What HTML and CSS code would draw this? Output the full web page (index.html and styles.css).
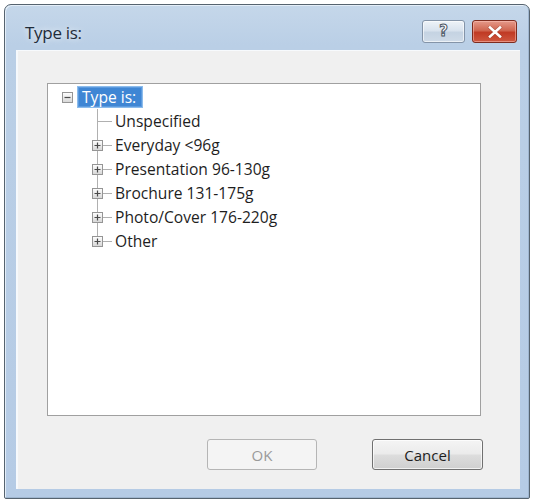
FILE: index.html
```html
<!DOCTYPE html>
<html>
<head>
<meta charset="utf-8">
<link rel="stylesheet" href="styles.css">
</head>
<body>
<div class="window">
  <div class="titlebar">
    <div class="title">Type is:</div>
    <div class="caption-buttons">
      <div class="cap help"><span>?</span></div>
      <div class="cap close">
        <svg width="16" height="12" viewBox="0 0 16 12">
          <path d="M3 1.5 L13 10.5 M13 1.5 L3 10.5" stroke="#7a2a1c" stroke-width="3.6" stroke-linecap="square" opacity="0.45"/>
          <path d="M3 1.5 L13 10.5 M13 1.5 L3 10.5" stroke="#ffffff" stroke-width="2.6" stroke-linecap="square"/>
        </svg>
      </div>
    </div>
  </div>
  <div class="client">
    <div class="tree">
      <div class="row root">
        <span class="expander">
          <svg width="11" height="11" viewBox="0 0 11 11">
            <defs><linearGradient id="g1" x1="0" y1="0" x2="0" y2="1"><stop offset="0" stop-color="#ffffff"/><stop offset="1" stop-color="#d6d6d6"/></linearGradient></defs>
            <rect x="0.5" y="0.5" width="10" height="10" fill="url(#g1)" stroke="#959595"/>
            <path d="M2.5 5.5 H8.5" stroke="#4a4a4a" stroke-width="1.2"/>
          </svg>
        </span>
        <span class="sel">Type is:</span>
      </div>
      <div class="children">
        <div class="row child">
          <span class="gutter leaf"></span><span class="conn"></span><span class="label">Unspecified</span>
        </div>
        <div class="row child">
          <span class="gutter"><svg width="11" height="11" viewBox="0 0 11 11"><defs><linearGradient id="g2" x1="0" y1="0" x2="0" y2="1"><stop offset="0" stop-color="#ffffff"/><stop offset="1" stop-color="#d6d6d6"/></linearGradient></defs><rect x="0.5" y="0.5" width="10" height="10" fill="url(#g2)" stroke="#959595"/><path d="M2.5 5.5 H8.5 M5.5 2.5 V8.5" stroke="#4a4a4a" stroke-width="1.2"/></svg></span><span class="conn"></span><span class="label">Everyday &lt;96g</span>
        </div>
        <div class="row child">
          <span class="gutter"><svg width="11" height="11" viewBox="0 0 11 11"><rect x="0.5" y="0.5" width="10" height="10" fill="url(#g2)" stroke="#959595"/><path d="M2.5 5.5 H8.5 M5.5 2.5 V8.5" stroke="#4a4a4a" stroke-width="1.2"/></svg></span><span class="conn"></span><span class="label">Presentation 96-130g</span>
        </div>
        <div class="row child">
          <span class="gutter"><svg width="11" height="11" viewBox="0 0 11 11"><rect x="0.5" y="0.5" width="10" height="10" fill="url(#g2)" stroke="#959595"/><path d="M2.5 5.5 H8.5 M5.5 2.5 V8.5" stroke="#4a4a4a" stroke-width="1.2"/></svg></span><span class="conn"></span><span class="label">Brochure 131-175g</span>
        </div>
        <div class="row child">
          <span class="gutter"><svg width="11" height="11" viewBox="0 0 11 11"><rect x="0.5" y="0.5" width="10" height="10" fill="url(#g2)" stroke="#959595"/><path d="M2.5 5.5 H8.5 M5.5 2.5 V8.5" stroke="#4a4a4a" stroke-width="1.2"/></svg></span><span class="conn"></span><span class="label">Photo/Cover 176-220g</span>
        </div>
        <div class="row child last">
          <span class="gutter"><svg width="11" height="11" viewBox="0 0 11 11"><rect x="0.5" y="0.5" width="10" height="10" fill="url(#g2)" stroke="#959595"/><path d="M2.5 5.5 H8.5 M5.5 2.5 V8.5" stroke="#4a4a4a" stroke-width="1.2"/></svg></span><span class="conn"></span><span class="label">Other</span>
        </div>
      </div>
    </div>
    <div class="buttons">
      <button class="btn disabled">OK</button>
      <button class="btn">Cancel</button>
    </div>
  </div>
</div>
</body>
</html>
```

FILE: styles.css
```css
html, body {
  margin: 0;
  padding: 0;
  background: #ffffff;
}

body {
  font-family: "Open Sans", "Noto Sans", sans-serif;
  width: 534px;
  height: 501px;
  overflow: hidden;
}

.window {
  margin: 4px 0 0 4px;
  width: 526px;
  height: 495px;
  box-sizing: border-box;
  border: 1px solid #56636f;
  border-radius: 7px 7px 2px 2px;
  background: linear-gradient(#c5d7ea 0px, #bacfe6 40px, #b5cbe5 100%);
  padding: 0 9px 9px 11px;
  display: flex;
  flex-direction: column;
  box-shadow: inset 1px 1px 0 #e4eef8, inset -1px -1px 0 #9fb6d0;
}

.titlebar {
  height: 45px;
  flex: none;
  display: flex;
  align-items: flex-start;
  justify-content: space-between;
  margin-left: -11px;
  margin-right: -9px;
}

.title {
  margin: 17px 0 0 20px;
  font-size: 17px;
  line-height: 22px;
  color: #1f2c3a;
  letter-spacing: -0.3px;
  text-shadow: 0 0 6px rgba(255, 255, 255, 0.9);
}

.caption-buttons {
  display: flex;
  gap: 7px;
  margin: 15px 12px 0 0;
}

.cap {
  height: 23px;
  box-sizing: border-box;
  border-radius: 3px;
  display: flex;
  align-items: center;
  justify-content: center;
}

.help {
  width: 43px;
  border: 1px solid #8494a8;
  background: linear-gradient(#eef3f8 0%, #d9e3ee 45%, #c5d3e2 55%, #cfdbe8 100%);
  box-shadow: inset 0 0 0 1px rgba(255, 255, 255, 0.6);
}

.help span {
  font-family: "DejaVu Sans", sans-serif;
  font-size: 15px;
  font-weight: bold;
  color: #ffffff;
  -webkit-text-stroke: 1px #4b5563;
  line-height: 1;
}

.close {
  width: 45px;
  border: 1px solid #7d2c1f;
  background: linear-gradient(#e59a8a 0%, #d06650 45%, #c03a24 55%, #cf5840 100%);
  box-shadow: inset 0 0 0 1px rgba(255, 200, 190, 0.5);
}

.client {
  flex: 1;
  background: #f0f0f0;
  border-top: 1px solid #f7fafd;
  border-left: 2px solid #f6f9fc;
  display: flex;
  flex-direction: column;
  padding: 32px 37px 0 29px;
}

.tree {
  height: 333px;
  box-sizing: border-box;
  margin-right: 2px;
  border: 1px solid #a0a0a0;
  background: #ffffff;
  padding-top: 1px;
  display: flex;
  flex-direction: column;
  font-size: 15.6px;
  color: #1e1e1e;
}

.row {
  height: 24px;
  display: flex;
  align-items: center;
}

.root {
  padding-left: 14px;
}

.expander {
  width: 11px;
  height: 11px;
  display: flex;
  margin-right: 4px;
}

.sel {
  height: 22px;
  box-sizing: border-box;
  display: flex;
  align-items: center;
  padding: 0 6px 0 4px;
  background: #3f86d4;
  color: #ffffff;
  border: 1px solid #8cbcec;
  box-shadow: inset 0 0 0 1px #5c9ade;
}

.children {
  display: flex;
  flex-direction: column;
}

.child {
  padding-left: 44px;
}

.gutter {
  width: 11px;
  height: 24px;
  flex: none;
  display: flex;
  align-items: center;
  background: linear-gradient(#b0b0b0, #b0b0b0) no-repeat 5px 0 / 1px 100%;
}

.child.last .gutter {
  background-size: 1px 50%;
}

.gutter.leaf {
  background:
    linear-gradient(#b0b0b0, #b0b0b0) no-repeat 5px 0 / 1px 100%,
    linear-gradient(#b0b0b0, #b0b0b0) no-repeat 5px 12px / 6px 1px;
}

.conn {
  width: 9px;
  height: 1px;
  margin-right: 3px;
  background: #b0b0b0;
  flex: none;
}

.label {
  white-space: nowrap;
  line-height: 22px;
}

.buttons {
  display: flex;
  justify-content: flex-end;
  gap: 55px;
  margin-top: 23px;
}

.btn {
  height: 31px;
  font-family: "Open Sans", "Noto Sans", sans-serif;
  font-size: 15px;
  border-radius: 3px;
  padding: 0;
  color: #1e1e1e;
  border: 1px solid #707070;
  background: linear-gradient(#f4f4f4 0%, #ebebeb 48%, #dddddd 52%, #cfcfcf 100%);
  box-shadow: inset 0 0 0 1px rgba(255, 255, 255, 0.7);
  width: 111px;
}

.btn.disabled {
  width: 110px;
  color: #9a9a9a;
  border-color: #b5b5b5;
  background: #f4f4f4;
  box-shadow: none;
}
```
